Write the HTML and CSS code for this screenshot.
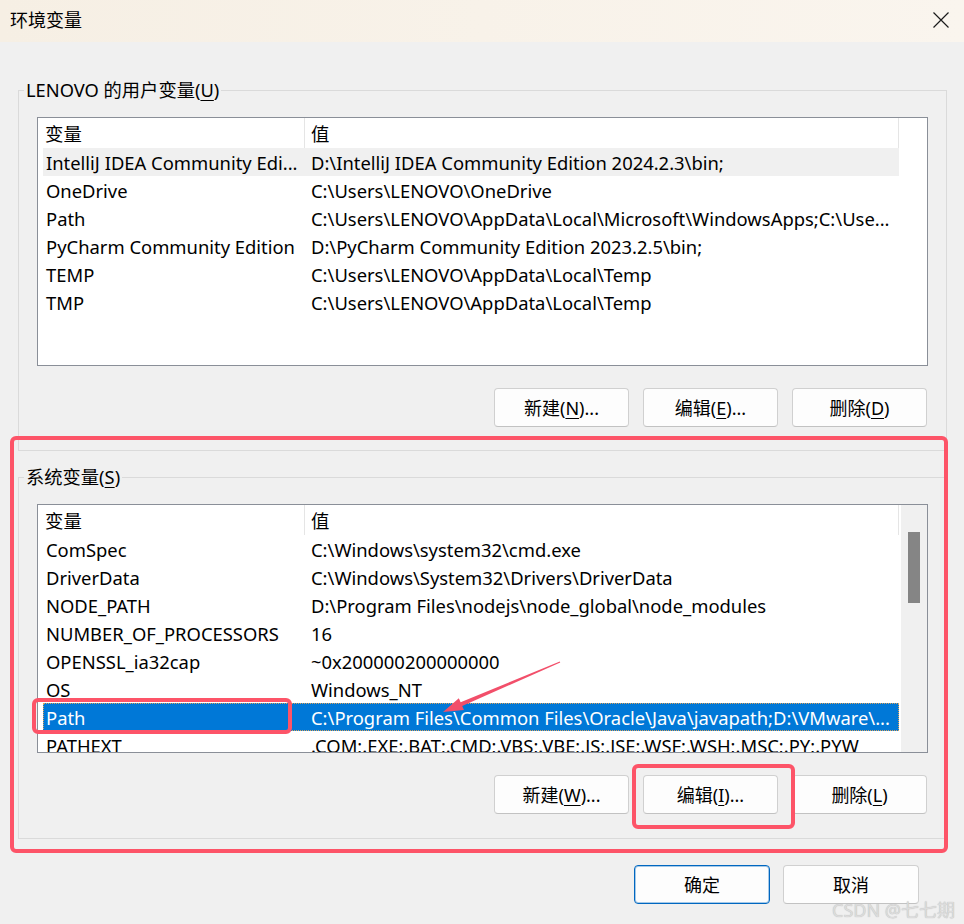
FILE: index.html
```html
<!DOCTYPE html>
<html>
<head>
  <meta charset="utf-8">
  <link rel="stylesheet" href="styles.css">
</head>
<body>
  <div class="titlebar">
    <span class="title">环境变量</span>
    <svg class="close-icon" width="16" height="16" viewBox="0 0 16 16">
      <path d="M0.5 0.5 L15.5 15.5 M15.5 0.5 L0.5 15.5" stroke="#1b1b1b" stroke-width="1.2" fill="none"/>
    </svg>
  </div>

  <fieldset class="group group-user">
    <legend>LENOVO 的用户变量(<u>U</u>)</legend>
    <div class="group-body">
      <div class="list">
        <div class="cols">
          <div class="list-head">
            <div class="head-name">变量</div>
            <div class="head-value">值</div>
          </div>
          <div class="row hover"><div class="name">IntelliJ IDEA Community Edi...</div><div class="value">D:\IntelliJ IDEA Community Edition 2024.2.3\bin;</div></div>
          <div class="row"><div class="name">OneDrive</div><div class="value">C:\Users\LENOVO\OneDrive</div></div>
          <div class="row"><div class="name">Path</div><div class="value">C:\Users\LENOVO\AppData\Local\Microsoft\WindowsApps;C:\Use...</div></div>
          <div class="row"><div class="name">PyCharm Community Edition</div><div class="value">D:\PyCharm Community Edition 2023.2.5\bin;</div></div>
          <div class="row"><div class="name">TEMP</div><div class="value">C:\Users\LENOVO\AppData\Local\Temp</div></div>
          <div class="row"><div class="name">TMP</div><div class="value">C:\Users\LENOVO\AppData\Local\Temp</div></div>
        </div>
      </div>
      <div class="btn-row">
        <button class="btn">新建(<u>N</u>)...</button>
        <button class="btn">编辑(<u>E</u>)...</button>
        <button class="btn">删除(<u>D</u>)</button>
      </div>
    </div>
  </fieldset>

  <fieldset class="group group-system">
    <legend>系统变量(<u>S</u>)</legend>
    <div class="group-body">
      <div class="list">
        <div class="cols">
          <div class="list-head">
            <div class="head-name">变量</div>
            <div class="head-value">值</div>
          </div>
          <div class="row"><div class="name">ComSpec</div><div class="value">C:\Windows\system32\cmd.exe</div></div>
          <div class="row"><div class="name">DriverData</div><div class="value">C:\Windows\System32\Drivers\DriverData</div></div>
          <div class="row"><div class="name">NODE_PATH</div><div class="value">D:\Program Files\nodejs\node_global\node_modules</div></div>
          <div class="row"><div class="name">NUMBER_OF_PROCESSORS</div><div class="value">16</div></div>
          <div class="row"><div class="name">OPENSSL_ia32cap</div><div class="value">~0x200000200000000</div></div>
          <div class="row"><div class="name">OS</div><div class="value">Windows_NT</div></div>
          <div class="row selected"><div class="name">Path</div><div class="value">C:\Program Files\Common Files\Oracle\Java\javapath;D:\VMware\...</div></div>
          <div class="row"><div class="name">PATHEXT</div><div class="value">.COM;.EXE;.BAT;.CMD;.VBS;.VBE;.JS;.JSE;.WSF;.WSH;.MSC;.PY;.PYW</div></div>
        </div>
        <div class="scrollbar"><div class="thumb"></div></div>
      </div>
      <div class="btn-row">
        <button class="btn">新建(<u>W</u>)...</button>
        <button class="btn">编辑(<u>I</u>)...</button>
        <button class="btn">删除(<u>L</u>)</button>
      </div>
    </div>
  </fieldset>

  <div class="dialog-buttons">
    <button class="btn btn-default">确定</button>
    <button class="btn">取消</button>
  </div>

  <!-- annotations drawn over the screenshot -->
  <div class="mark mark-system"></div>
  <div class="mark mark-path"></div>
  <div class="mark mark-edit"></div>
  <svg class="arrow" width="140" height="70" viewBox="0 0 140 70">
    <polygon points="129.76,11.45 30.61,52.30 28.84,48.16 13,62 33.96,60.12 32.19,55.98 130.24,12.55" fill="#f24f6a"/>
  </svg>

  <div class="watermark">CSDN @七七期</div>
</body>
</html>
```

FILE: styles.css
```css
body {
  margin: 0;
  width: 964px;
  height: 924px;
  position: relative;
  overflow: hidden;
  background: #f0f0f0;
  color: #000;
  font-family: "Noto Sans", "Noto Sans CJK SC", sans-serif;
  font-size: 18px;
}

u {
  text-decoration-thickness: 1px;
  text-underline-offset: 3px;
}

.titlebar {
  height: 42px;
  box-sizing: border-box;
  padding: 0 15px 2px 10px;
  display: flex;
  align-items: center;
  justify-content: space-between;
  background: linear-gradient(90deg, #f6efe4, #faf5ee);
}

.title {
  font-size: 18px;
  line-height: 24px;
}

.close-icon {
  display: block;
}

/* group boxes */
.group {
  margin: 36px 17px 0 18px;
  padding: 0;
  min-width: 0;
  border: 1px solid #dadada;
}

.group-system {
  margin-top: 14px;
}

.group legend {
  margin-left: 5px;
  padding: 0 2px;
  line-height: 24px;
  font-size: 18.3px;
}

.group-body {
  padding: 15px 18px 23px 18px;
}

.group-system .group-body {
  padding-bottom: 24px;
}

/* list view */
.list {
  height: 249px;
  box-sizing: border-box;
  border: 1px solid #8a8f98;
  background: #fff;
  display: flex;
  overflow: hidden;
  font-size: 18.4px;
}

.cols {
  width: 861px;
  flex: none;
}

.list-head {
  display: flex;
  height: 30px;
  line-height: 31px;
}

.head-name {
  width: 267px;
  box-sizing: border-box;
  padding-left: 7px;
  border-right: 1px solid #e5e5e5;
}

.head-value {
  flex: 1;
  padding-left: 6px;
  border-right: 1px solid #e5e5e5;
}

.row {
  display: flex;
  height: 28px;
  line-height: 30px;
  margin-left: 5px;
  white-space: nowrap;
}

.row .name {
  width: 262px;
  flex: none;
  box-sizing: border-box;
  padding-left: 3px;
  overflow: hidden;
}

.row .value {
  flex: 1;
  padding-left: 6px;
  overflow: hidden;
}

.row.hover {
  background: #f0f0f0;
}

.row.selected {
  background: #0078d7;
  color: #fff;
  outline: 1px dotted #d9a25c;
  outline-offset: -1px;
}

.scrollbar {
  width: 26px;
  margin-left: 2px;
  background: #f0f0f0;
  padding-top: 27px;
  box-sizing: border-box;
}

.thumb {
  width: 12px;
  height: 71px;
  margin-left: 7px;
  background: #858585;
}

/* buttons */
.btn-row {
  display: flex;
  justify-content: flex-end;
  gap: 14px;
  margin-top: 22px;
  padding-right: 1px;
}

.btn {
  width: 135px;
  height: 39px;
  padding: 0;
  box-sizing: border-box;
  border: 1px solid #d0d0d0;
  border-bottom-color: #c2c2c2;
  border-radius: 4px;
  background: #fdfdfd;
  color: #000;
  font-family: inherit;
  font-size: 18px;
  line-height: 24px;
}

.dialog-buttons {
  display: flex;
  justify-content: flex-end;
  gap: 13px;
  margin-top: 26px;
  padding-right: 45px;
}

.dialog-buttons .btn {
  width: 136px;
}

.btn-default {
  border: 1px solid #0067c0;
  box-shadow: inset 0 0 0 1px rgba(0, 103, 192, 0.35);
}

/* red annotation marks */
.mark {
  position: absolute;
  box-sizing: border-box;
  border: 4px solid #fd5468;
  border-radius: 6px;
}

.mark-system {
  left: 10px;
  top: 436px;
  width: 938px;
  height: 417px;
}

.mark-path {
  left: 32px;
  top: 698px;
  width: 260px;
  height: 36px;
}

.mark-edit {
  left: 632px;
  top: 764px;
  width: 163px;
  height: 65px;
}

.arrow {
  position: absolute;
  left: 430px;
  top: 650px;
}

.watermark {
  position: absolute;
  left: 832px;
  top: 898px;
  font-size: 18px;
  line-height: 24px;
  color: #dcdcdc;
  text-shadow: 0 0 1px #b0b0b0;
  white-space: nowrap;
}
```
